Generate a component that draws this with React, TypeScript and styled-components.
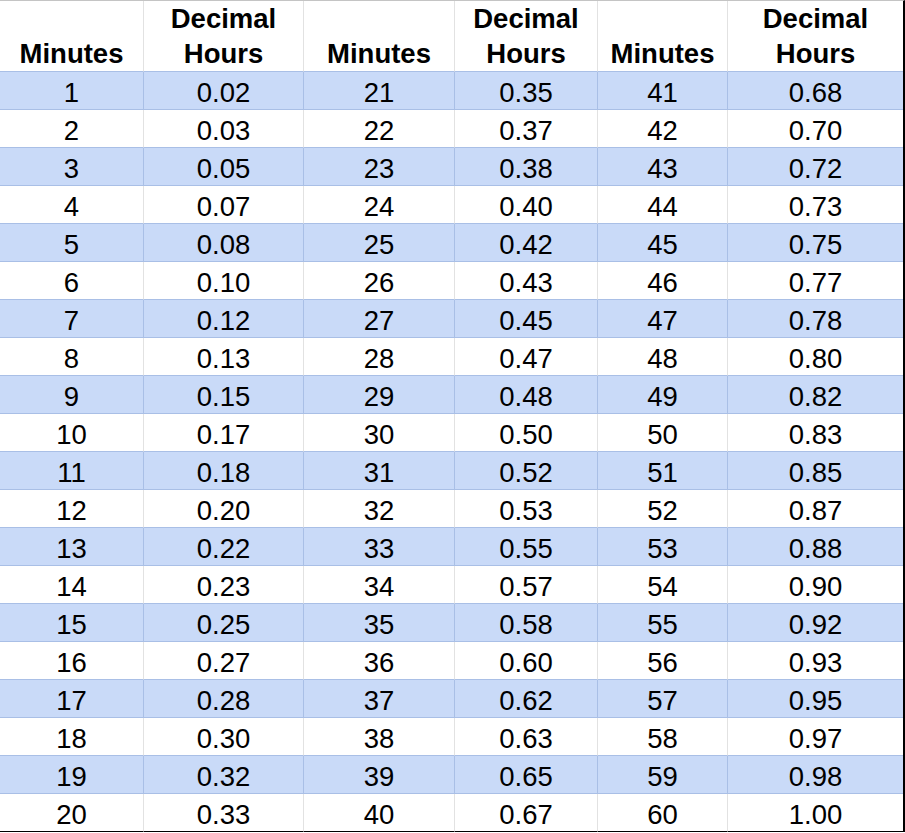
import React from 'react';
import styled, { createGlobalStyle } from 'styled-components';

const COLUMN_WIDTHS = [144, 160, 151, 143, 130, 175];
const ROWS = 20;
const BLUE = '#c9daf8';
const BLUE_LINE = '#a9bfe6';
const GRAY_LINE = '#e2e2e2';

const toHours = (m: number) => (Math.round((m * 100) / 60) / 100).toFixed(2);

export default function App() {
  const rows = Array.from({ length: ROWS }, (_, i) => i);

  return (
    <>
      <GlobalStyle />
      <Sheet>
        {[0, 1, 2].map((g) => (
          <React.Fragment key={`h${g}`}>
            <HeaderCell>Minutes</HeaderCell>
            <HeaderCell $last={g === 2}>
              Decimal
              <br />
              Hours
            </HeaderCell>
          </React.Fragment>
        ))}
        {rows.map((i) => (
          <React.Fragment key={i}>
            {[0, 1, 2].map((g) => {
              const m = g * ROWS + i + 1;
              const shaded = i % 2 === 0;
              return (
                <React.Fragment key={g}>
                  <Cell $shaded={shaded} $bottom={i === ROWS - 1}>
                    {m}
                  </Cell>
                  <Cell $shaded={shaded} $bottom={i === ROWS - 1} $last={g === 2}>
                    {toHours(m)}
                  </Cell>
                </React.Fragment>
              );
            })}
          </React.Fragment>
        ))}
      </Sheet>
    </>
  );
}

const GlobalStyle = createGlobalStyle`
  html, body {
    margin: 0;
    padding: 0;
    background: #ffffff;
  }
  body {
    font-family: "Liberation Sans", Arial, sans-serif;
    color: #000000;
  }
`;

const Sheet = styled.div`
  display: grid;
  grid-template-columns: ${COLUMN_WIDTHS.map((w) => `${w}px`).join(' ')};
  width: 905px;
  box-sizing: border-box;
  border-right: 2px solid #000000;
  border-top: 1px solid #c4c4c4;
  font-size: 27.5px;
`;

const HeaderCell = styled.div<{ $last?: boolean }>`
  height: 71px;
  box-sizing: border-box;
  display: flex;
  flex-direction: column;
  justify-content: flex-end;
  text-align: center;
  font-weight: 700;
  line-height: 35px;
  border-right: ${({ $last }) => ($last ? 'none' : `1px solid ${GRAY_LINE}`)};
  border-bottom: 1px solid ${BLUE_LINE};
`;

const Cell = styled.div<{ $shaded: boolean; $bottom?: boolean; $last?: boolean }>`
  height: 38px;
  box-sizing: border-box;
  padding-top: 4px;
  line-height: 33px;
  text-align: center;
  background: ${({ $shaded }) => ($shaded ? BLUE : '#ffffff')};
  border-right: ${({ $last, $shaded }) =>
    $last ? 'none' : `1px solid ${$shaded ? BLUE_LINE : GRAY_LINE}`};
  border-bottom: 1px solid ${({ $bottom }) => ($bottom ? '#000000' : BLUE_LINE)};
`;
